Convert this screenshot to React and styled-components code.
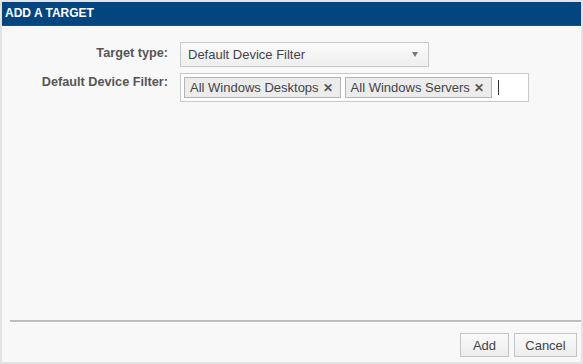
import styled, { createGlobalStyle } from "styled-components";

const Global = createGlobalStyle`
  html, body {
    margin: 0;
    padding: 0;
    background: #ffffff;
  }
  * { box-sizing: border-box; }
`;

const Frame = styled.div`
  width: 583px;
  height: 364px;
  border: 2px solid #e3e3e3;
  background: #f8f8f8;
  display: flex;
  flex-direction: column;
  font-family: "Liberation Sans", Arial, sans-serif;
`;

const Header = styled.div`
  height: 24px;
  background: #03467f;
  border-bottom: 1px solid #1f4f7a;
  color: #ffffff;
  font-weight: bold;
  font-size: 12px;
  line-height: 22px;
  padding-left: 3px;
`;

const Body = styled.div`
  flex: 1;
  display: grid;
  grid-template-columns: 166px 1fr;
  column-gap: 12px;
  row-gap: 6px;
  align-content: start;
  padding-top: 16px;
`;

const Label = styled.div`
  text-align: right;
  font-size: 12.7px;
  font-weight: bold;
  color: #555555;
  padding-top: ${p => p.$top}px;
`;

const Select = styled.div`
  width: 249px;
  height: 25px;
  border: 1px solid #c8c8c8;
  background: linear-gradient(#fafafa, #efefef);
  display: flex;
  align-items: center;
  justify-content: space-between;
  padding: 0 10px 0 7px;
  font-size: 13px;
  color: #444444;
`;

const Arrow = styled.span`
  width: 0;
  height: 0;
  border-left: 3px solid transparent;
  border-right: 3px solid transparent;
  border-top: 5px solid #777777;
`;

const TagBox = styled.div`
  width: 349px;
  height: 29px;
  border: 1px solid #c8c8c8;
  background: #ffffff;
  display: flex;
  align-items: center;
  gap: 4px;
  padding-left: 3px;
`;

const Tag = styled.span`
  height: 21px;
  border: 1px solid #b4b4b4;
  background: #ececec;
  display: inline-flex;
  align-items: center;
  gap: 4px;
  padding: 0 7px 0 5px;
  font-size: 13px;
  color: #444444;
`;

const Remove = styled.span`
  font-weight: bold;
  font-size: 12px;
  color: #555555;
`;

const Caret = styled.span`
  width: 1px;
  height: 15px;
  background: #333333;
  margin-left: 2px;
`;

const Footer = styled.div`
  padding-left: 8px;
`;

const Divider = styled.div`
  border-top: 2px solid #bdbdbd;
  border-bottom: 1px solid #ffffff;
`;

const Buttons = styled.div`
  display: flex;
  justify-content: flex-end;
  gap: 5px;
  padding: 10px 4px 5px 0;
`;

const Button = styled.button`
  height: 24px;
  width: ${p => p.$w}px;
  border: 1px solid #c4c4c4;
  background: linear-gradient(#fbfbfb, #ececec);
  font-family: "Liberation Sans", Arial, sans-serif;
  font-size: 13px;
  color: #444444;
  padding: 0;
`;

export default function App() {
  return (
    <>
      <Global />
      <Frame>
        <Header>ADD A TARGET</Header>
        <Body>
          <Label $top={4}>Target type:</Label>
          <Select>
            <span>Default Device Filter</span>
            <Arrow />
          </Select>
          <Label $top={2}>Default Device Filter:</Label>
          <TagBox>
            <Tag>All Windows Desktops <Remove>✕</Remove></Tag>
            <Tag>All Windows Servers <Remove>✕</Remove></Tag>
            <Caret />
          </TagBox>
        </Body>
        <Footer>
          <Divider />
          <Buttons>
            <Button $w={49}>Add</Button>
            <Button $w={63}>Cancel</Button>
          </Buttons>
        </Footer>
      </Frame>
    </>
  );
}
